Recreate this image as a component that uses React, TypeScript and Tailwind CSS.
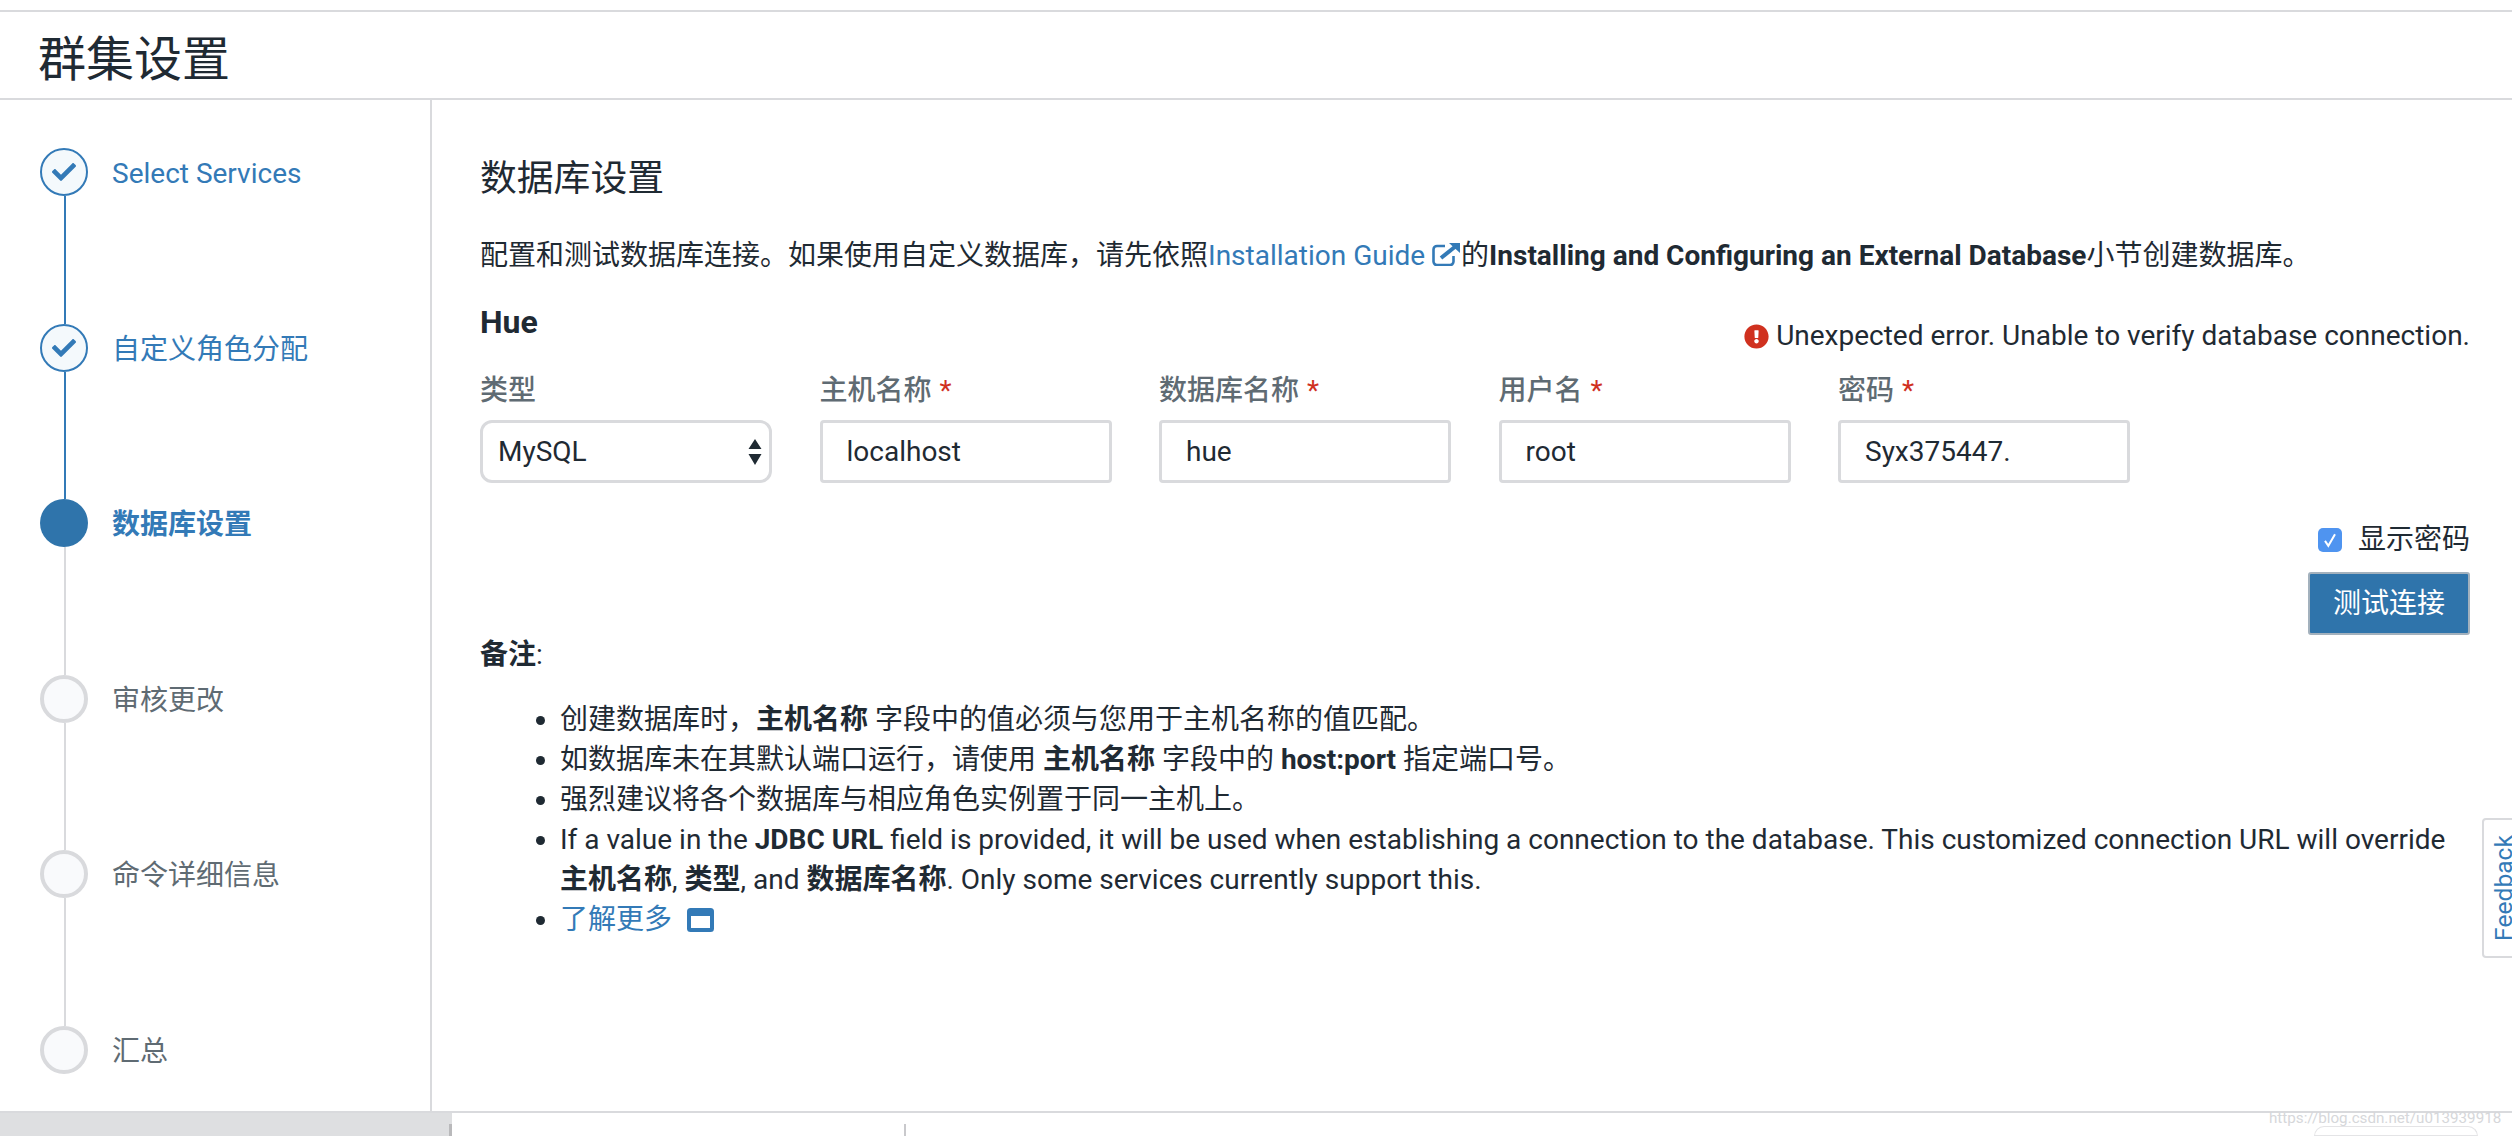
import React from "react";
import { FaCheck, FaExclamationCircle } from "react-icons/fa";

const steps = [
  { label: "Select Services", state: "done", line: "blue" },
  { label: "自定义角色分配", state: "done", line: "blue" },
  { label: "数据库设置", state: "active", line: "gray" },
  { label: "审核更改", state: "todo", line: "gray" },
  { label: "命令详细信息", state: "todo", line: "gray" },
  { label: "汇总", state: "todo", line: "none" },
];

function Step({ label, state, line }: { label: string; state: string; line: string }) {
  return (
    <div className="flex h-[175.6px] gap-6">
      <div className="flex w-12 flex-col items-center">
        {state === "done" && (
          <div className="flex size-12 shrink-0 items-center justify-center rounded-full border-2 border-[#337ab7] bg-[#f4f9fc] text-[#337ab7]">
            <FaCheck className="size-6" />
          </div>
        )}
        {state === "active" && <div className="size-12 shrink-0 rounded-full bg-[#2f74ab]" />}
        {state === "todo" && <div className="size-12 shrink-0 rounded-full border-4 border-[#d9dadd] bg-[#f9fafc]" />}
        {line === "blue" && <div className="ml-[2px] w-[2px] flex-1 bg-[#337ab7]" />}
        {line === "gray" && <div className="ml-[2px] w-[2px] flex-1 bg-[#d9dadd]" />}
      </div>
      <div
        className={
          "h-12 text-[28px] leading-[51px] " +
          (state === "todo" ? "text-[#5f6b73]" : "text-[#337ab7]") +
          (state === "active" ? " font-bold" : "")
        }
      >
        {label}
      </div>
    </div>
  );
}

function Label({ text, req = true }: { text: string; req?: boolean }) {
  return (
    <div className="h-10 text-[28px] leading-10 font-medium text-[#5f6b73]">
      {text}
      {req && <span className="ml-2 font-normal text-[#d0311f]">*</span>}
    </div>
  );
}

function Field({ label, value }: { label: string; value: string }) {
  return (
    <div className="w-[292px]">
      <Label text={label} />
      <input
        readOnly
        value={value}
        className="mt-[9px] h-[63px] w-full rounded-[4px] border-[3px] border-[#d9dadd] bg-white pl-6 text-[28px] text-[#1f2a33] outline-none"
      />
    </div>
  );
}

export default function App() {
  return (
    <div
      className="relative flex h-[1136px] w-full flex-col overflow-hidden bg-white text-[28px] leading-10 text-[#1f2a33]"
      style={{ fontFamily: 'Roboto, "Noto Sans CJK SC", sans-serif' }}
    >
      <div className="h-[10px] shrink-0" />
      <header className="flex h-[90px] shrink-0 items-center border-y-2 border-[#d9dadd] pt-[10px] pl-[38px] text-[48px] leading-[60px]">
        群集设置
      </header>
      <div className="flex h-[1011px] shrink-0">
        <aside className="w-[432px] shrink-0 border-r-2 border-[#d9dadd] pt-12 pl-10">
          {steps.map((s) => (
            <Step key={s.label} {...s} />
          ))}
        </aside>
        <main className="flex-1 pt-[57px] pr-[42px] pl-12">
          <h2 className="text-[36.8px] leading-[44px]">数据库设置</h2>
          <p className="mt-[35px] flex h-10 items-center whitespace-pre">
            配置和测试数据库连接。如果使用自定义数据库，请先依照
            <span className="text-[#337ab7]">Installation Guide</span>
            <svg viewBox="0 0 28 23" className="mt-[-3px] mr-[1px] ml-[7px] h-[23px] w-7" fill="none" stroke="#337ab7">
              <path d="M13 3H5a3.5 3.5 0 0 0-3.5 3.5v12A3.5 3.5 0 0 0 5 22h13a3.5 3.5 0 0 0 3.5-3.5V13" strokeWidth="2.6" />
              <path d="M9 15L24 3" strokeWidth="4" />
              <path d="M17 0h11v10z" fill="#337ab7" stroke="none" />
            </svg>
            的<b>Installing and Configuring an External Database</b>小节创建数据库。
          </p>
          <div className="mt-6 flex h-14 justify-between">
            <h3 className="text-[32px] leading-[44px] font-bold">Hue</h3>
            <div className="flex items-end">
              <div className="flex h-10 items-center gap-[7px]">
                <FaExclamationCircle className="size-[25px] text-[#d0311f]" />
                <span>Unexpected error. Unable to verify database connection.</span>
              </div>
            </div>
          </div>
          <div className="mt-[15px] flex gap-[47.5px]">
            <div className="w-[292px]">
              <Label text="类型" req={false} />
              <div className="mt-[9px] flex h-[63px] items-center justify-between rounded-[12px] border-[3px] border-[#d9dadd] bg-white pr-[7px] pl-[15px]">
                <span>MySQL</span>
                <svg viewBox="0 0 14 26" className="h-[26px] w-[14px]" fill="#1f2a33">
                  <path d="M7 0l6.5 10H.5zM7 26L.5 15h13z" />
                </svg>
              </div>
            </div>
            <Field label="主机名称" value="localhost" />
            <Field label="数据库名称" value="hue" />
            <Field label="用户名" value="root" />
            <Field label="密码" value="Syx375447." />
          </div>
          <div className="mt-[37px] flex h-10 items-center justify-end gap-[16px]">
            <div className="flex size-6 items-center justify-center rounded-[5px] bg-[#4f94f0]">
              <svg viewBox="0 0 24 24" className="size-5" fill="none" stroke="white" strokeWidth="2.4">
                <path d="M6 13l4 6 8-14" />
              </svg>
            </div>
            <span>显示密码</span>
          </div>
          <div className="mt-3 flex justify-end">
            <button className="h-[63px] w-[162px] rounded-[3px] border-[2px] border-[#a3b1bd] bg-[#2f74ab] text-[28px] text-white">
              测试连接
            </button>
          </div>
          <div className="font-bold">
            备注<span className="font-normal">:</span>
          </div>
          <ul className="mt-[25px] list-disc pl-[80px] marker:text-[#1f2a33]">
            <li>
              创建数据库时，<b>主机名称</b> 字段中的值必须与您用于主机名称的值匹配。
            </li>
            <li>
              如数据库未在其默认端口运行，请使用 <b>主机名称</b> 字段中的 <b>host:port</b> 指定端口号。
            </li>
            <li>强烈建议将各个数据库与相应角色实例置于同一主机上。</li>
            <li>
              If a value in the <b>JDBC URL</b> field is provided, it will be used when establishing a connection to the
              database. This customized connection URL will override <b>主机名称</b>, <b>类型</b>, and <b>数据库名称</b>.
              Only some services currently support this.
            </li>
            <li>
              <span className="inline-flex items-center gap-[15px] text-[#337ab7]">
                了解更多
                <svg viewBox="0 0 27 24" className="h-6 w-[27px]">
                  <rect x="0" y="0" width="27" height="24" rx="3.5" fill="#337ab7" />
                  <rect x="4" y="8" width="19" height="12" fill="white" />
                </svg>
              </span>
            </li>
          </ul>
        </main>
      </div>
      <footer className="flex flex-1 border-t-2 border-[#d9dadd]">
        <div className="flex w-[452px] justify-end bg-[#dedfe1] pt-[11px]">
          <div className="w-[3px] bg-[#b9b9bb]" />
        </div>
        <div className="flex flex-1 pt-[11px]">
          <div className="ml-[452px] w-[2px] bg-[#c9c9cc]" />
        </div>
        <div className="mt-[13px] mr-[34px] w-[164px] rounded-t-[10px] border border-[#e4e4e6]" />
      </footer>
      <div className="absolute top-[1098px] left-[2269px] text-[15.2px] whitespace-nowrap text-[#d6d7da]">
        https://blog.csdn.net/u013939918
      </div>
      <div className="absolute top-[818px] right-[-14px] flex h-[140px] w-[44px] items-center justify-center rounded-l-[4px] border-2 border-[#d9dadd] bg-white">
        <span className="rotate-[-90deg] text-[24.6px] whitespace-nowrap text-[#337ab7]">Feedback</span>
      </div>
    </div>
  );
}
